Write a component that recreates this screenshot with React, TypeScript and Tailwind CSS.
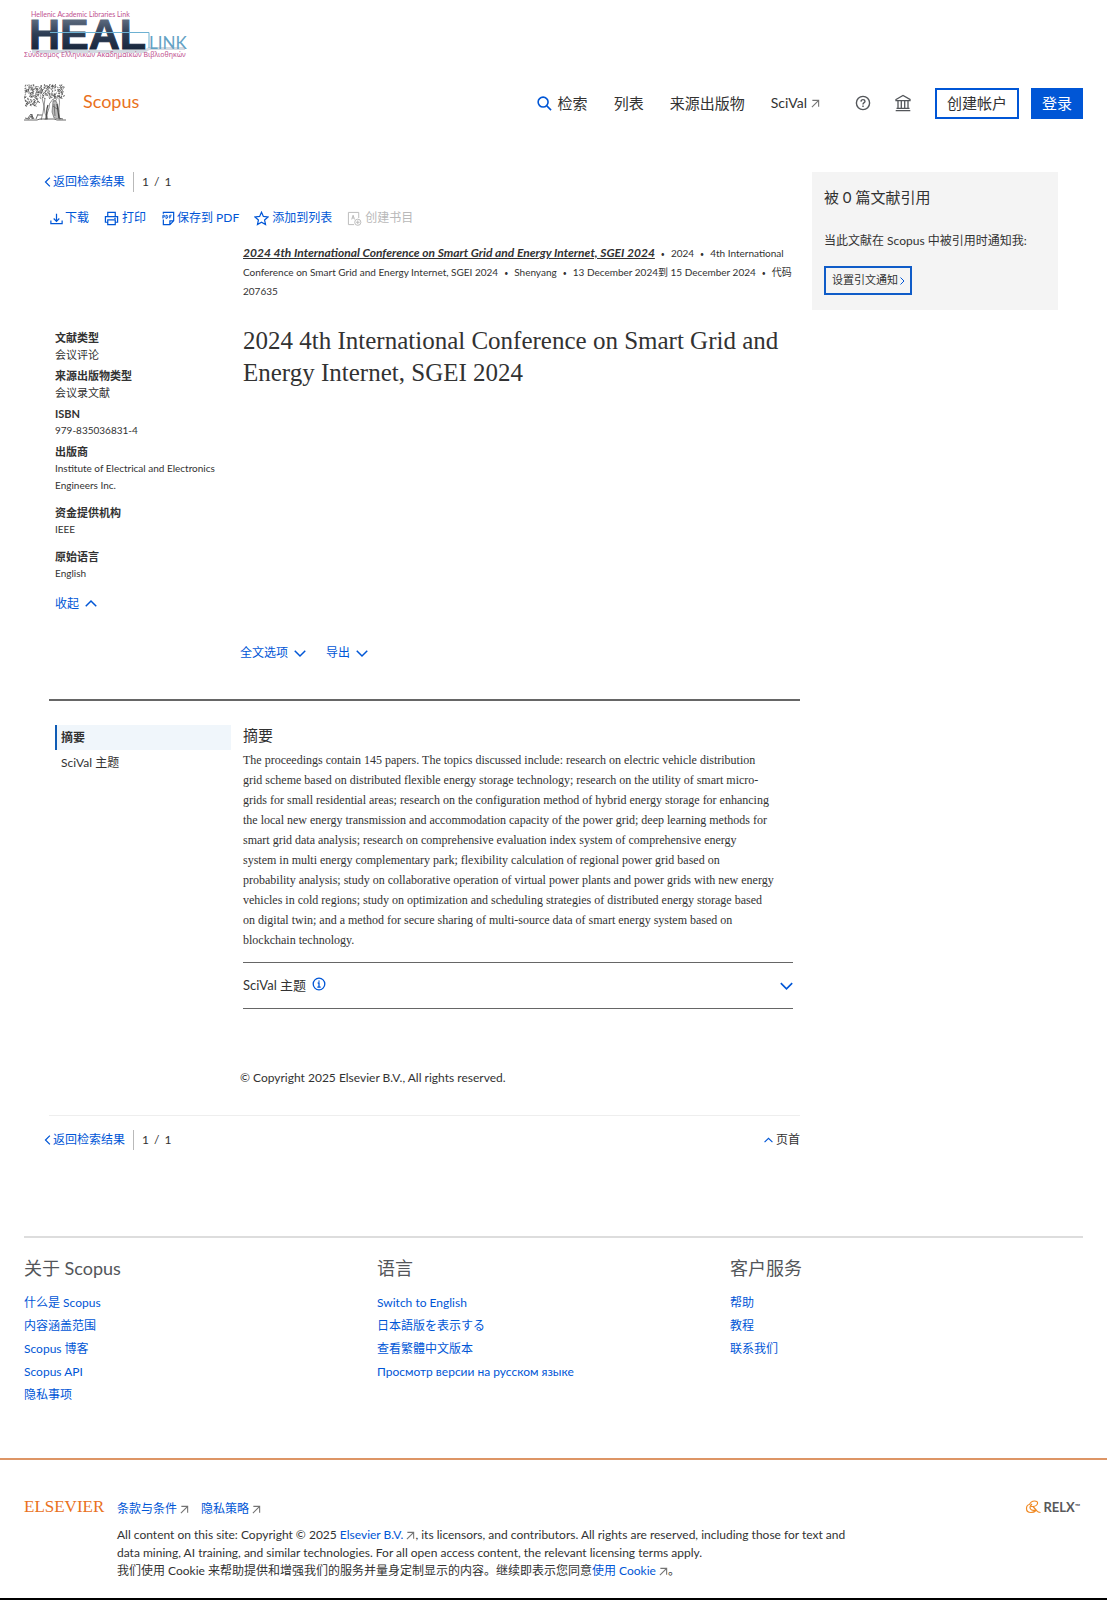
import type { ReactNode } from 'react'

const BLUE = 'text-[#0056d6]'

const ABSTRACT = [
  'The proceedings contain 145 papers. The topics discussed include: research on electric vehicle distribution',
  'grid scheme based on distributed flexible energy storage technology; research on the utility of smart micro-',
  'grids for small residential areas; research on the configuration method of hybrid energy storage for enhancing',
  'the local new energy transmission and accommodation capacity of the power grid; deep learning methods for',
  'smart grid data analysis; research on comprehensive evaluation index system of comprehensive energy',
  'system in multi energy complementary park; flexibility calculation of regional power grid based on',
  'probability analysis; study on collaborative operation of virtual power plants and power grids with new energy',
  'vehicles in cold regions; study on optimization and scheduling strategies of distributed energy storage based',
  'on digital twin; and a method for secure sharing of multi-source data of smart energy system based on',
  'blockchain technology.',
]

const DETAILS = [
  { label: '文献类型', value: '会议评论', gap: 'mb-1', size: 'text-[11px]' },
  { label: '来源出版物类型', value: '会议录文献', gap: 'mb-1', size: 'text-[11px]' },
  { label: 'ISBN', value: '979-835036831-4', gap: 'mb-1', size: 'text-[10px]' },
  { label: '出版商', value: 'Institute of Electrical and Electronics Engineers Inc.', gap: 'mb-2.5', size: 'text-[10px]' },
  { label: '资金提供机构', value: 'IEEE', gap: 'mb-2.5', size: 'text-[10px]' },
  { label: '原始语言', value: 'English', gap: 'mb-[13px]', size: 'text-[10px]' },
]

const FOOTER = [
  { title: '关于 Scopus', links: ['什么是 Scopus', '内容涵盖范围', 'Scopus 博客', 'Scopus API', '隐私事项'] },
  { title: '语言', links: ['Switch to English', '日本語版を表示する', '查看繁體中文版本', 'Просмотр версии на русском языке'] },
  { title: '客户服务', links: ['帮助', '教程', '联系我们'] },
]

const CHEVRONS = {
  up: 'M1 11 8 4l7 7',
  down: 'M1 5l7 7 7-7',
  left: 'M11 1 4 8l7 7',
  right: 'M5 1l7 7-7 7',
}

function Chevron({ dir, className }: { dir: keyof typeof CHEVRONS; className: string }) {
  return (
    <svg viewBox="0 0 16 16" className={`shrink-0 ${className}`} fill="none" stroke="#0056d6" strokeWidth="2" aria-hidden>
      <path d={CHEVRONS[dir]} />
    </svg>
  )
}

function External() {
  return (
    <svg viewBox="0 0 10 10" className="inline-block size-[9px]" fill="none" stroke="#737373" strokeWidth="1.2" aria-hidden>
      <path d="M1.5 1.5h7v7M8.5 1.5 1 9" />
    </svg>
  )
}

function HealLogo() {
  return (
    <svg viewBox="0 0 166 52" className="h-[52px] w-[166px]" role="img" aria-label="HEAL-Link">
      <defs>
        <linearGradient id="heal" x1="0" y1="0" x2="0" y2="1">
          <stop offset="0" stopColor="#7b889a" />
          <stop offset="0.5" stopColor="#2d3d54" />
          <stop offset="1" stopColor="#0e1b30" />
        </linearGradient>
      </defs>
      <path d="M8 41.500h112l5-3h36" stroke="#d3dae1" strokeWidth="3" fill="none" />
      <text x="7" y="7" fontSize="7" fontFamily="Lato, sans-serif" fill="#c0508f">
        Hellenic Academic Libraries Link
      </text>
      <text x="5" y="39" fontSize="43" fontFamily="Liberation Sans, sans-serif" fontWeight="700" fill="url(#heal)" stroke="url(#heal)" strokeWidth="1">
        HEAL
      </text>
      <path d="M26 22.500H125V38" fill="none" stroke="#6db1d2" strokeWidth="1" />
      <text x="125" y="39" fontSize="17" fontFamily="Lato, sans-serif" fill="#64a2c4">
        LINK
      </text>
      <text x="0" y="47" fontSize="7" fontFamily="Noto Sans, sans-serif" fill="#c0508f">
        Σύνδεσμος Ελληνικών Ακαδημαϊκών Βιβλιοθηκών
      </text>
    </svg>
  )
}

const scatter = (n: number) => {
  const v = Math.sin(n) * 43758.5453
  return v - Math.floor(v)
}

// small leaf strokes that fill the crown of the tree
const LEAVES = Array.from({ length: 340 }, (_, i) => {
  const low = i % 6 === 0
  const x = low ? 1 + scatter(i + 1) * 14 : 1 + scatter(i + 1) * 39
  const y = low ? 15 + scatter(i * 7 + 3) * 7 : 1 + scatter(i * 7 + 3) * 13
  const a = scatter(i * 3 + 5) * 6.28
  return `M${x.toFixed(1)} ${y.toFixed(1)}l${(Math.cos(a) * 1.4).toFixed(1)} ${(Math.sin(a) * 1.4).toFixed(1)}`
}).join('')

function TreeLogo() {
  return (
    <svg viewBox="0 0 42 38" className="h-[38px] w-[42px]" fill="none" stroke="#444" role="img" aria-label="Elsevier">
      <path d={LEAVES} strokeWidth="0.7" />
      <path
        d="M18 14l2 8-1 7-2 7M21 14l-1 8 1 7 2 7M29 15q-5 5-4 9l-4 12M35 14q1 4 0 9t1 13"
        strokeWidth="0.6"
      />
      <path d="M0 36h13l3-1h14l3 1h9M4 34l3-4 3 5M8 30v5M12 35l2-5M1 34l4 1M34 34l5 1M14 31h4M5 35l2-3 2 3" strokeWidth="0.8" />
      <path d="M29 17q3-2 4 2l2 8v8l-5-1-2-6z" fill="#bbb" strokeWidth="0.5" />
      <path d="M24 21q-2 5-1 14M33 20l2 14" strokeWidth="1.2" />
      <circle cx="31" cy="15.500" r="1.400" fill="#fff" strokeWidth="0.6" />
      <path d="M30 20l1 12M29 22l4 3" strokeWidth="0.6" />
    </svg>
  )
}

function BackNav() {
  return (
    <div className="-ml-1.5 flex items-center text-[12px] leading-5">
      <a href="#results" className={`flex items-center ${BLUE}`}>
        <Chevron dir="left" className="size-[10px]" />
        返回检索结果
      </a>
      <span className="ml-2 h-5 border-l border-[#b9b9b9] pl-2">
        1<span className="px-[5px]">/</span>1
      </span>
    </div>
  )
}

function Tool({ icon, label, disabled, gap }: { icon: ReactNode; label: string; disabled?: boolean; gap: string }) {
  return (
    <button type="button" disabled={disabled} className={`flex items-center ${gap} ${disabled ? 'text-[#b9b9b9]' : BLUE}`}>
      <svg viewBox="0 0 16 16" className="size-[15px]" fill="none" stroke="currentColor" strokeWidth="1.3" aria-hidden>
        {icon}
      </svg>
      {label}
    </button>
  )
}

function Header() {
  return (
    <header className="px-6 pt-2.5">
      <HealLogo />
      <div className="mt-[22px] flex items-center">
        <TreeLogo />
        <a href="#home" className="ml-[17px] pb-1 text-[18px] leading-6 text-[#e9711c]">
          Scopus
        </a>
        <nav className="ml-auto flex items-center text-[15px] leading-6">
          <a href="#search" className="flex items-center gap-1.5">
            <svg viewBox="0 0 16 16" className="size-[15px]" fill="none" stroke="#0056d6" strokeWidth="1.7" aria-hidden>
              <circle cx="6.500" cy="6.500" r="5.300" />
              <path d="m10.500 10.500 4.500 4.500" />
            </svg>
            检索
          </a>
          <a href="#lists" className="ml-[26px]">列表</a>
          <a href="#sources" className="ml-[26px]">来源出版物</a>
          <a href="#scival" className="ml-[26px] flex items-center gap-1 text-[14px]">
            SciVal
            <External />
          </a>
          <button type="button" aria-label="帮助" className="ml-[35px]">
            <svg viewBox="0 0 16 16" className="size-4" fill="none" stroke="#53565a" strokeWidth="1.4" aria-hidden>
              <circle cx="8" cy="8" r="6.600" />
              <path d="M6 6.600q.1-2 2-2t2 1.700q0 1-1.200 1.600Q8 8.400 8 9.600M8 10.600v1.500" />
            </svg>
          </button>
          <button type="button" aria-label="机构" className="ml-6">
            <svg viewBox="0 0 16 18" className="h-[18px] w-4" fill="none" stroke="#53565a" strokeWidth="1.300" aria-hidden>
              <path d="M1 5.500 8 1.500l7 4v1.200H1zM3 7v7M6.300 7v7M9.700 7v7M13 7v7M1.500 14.300h13M.7 16.600h14.600" />
            </svg>
          </button>
          <button type="button" className="ml-6 h-[31px] border-2 border-[#0056d6] px-[10px]">创建帐户</button>
          <button type="button" className="ml-3 h-[31px] bg-[#0056d6] px-[11px] text-white">登录</button>
        </nav>
      </div>
    </header>
  )
}

function Toolbar() {
  return (
    <div className="mt-4 flex h-5 items-center gap-[15px] text-[12px] leading-5">
      <Tool label="下载" gap="gap-px" icon={<path d="M8 3v7.500M5 8l3 3 3-3M2 10v3.500h12V10" />} />
      <Tool label="打印" gap="gap-[3px]" icon={<path d="M4 6V1.500h8V6M4 12H1.500V6h13v6H12M4 9.500h8v5H4zM11 7.800h1.500" />} />
      <Tool
        label="保存到 PDF"
        gap="gap-px"
        icon={
          <>
            <path d="M2.500 9v5.500h7l4-4v-9h-11V3M9.500 14.500v-4h4" />
            <path d="M2 8V4.500h1.500V6.500H2M5.300 8V4.500q2 0 2 1.700T5.300 8M9.300 8V4.500h2M9.300 6.200h1.500" strokeWidth="1" />
          </>
        }
      />
      <Tool label="添加到列表" gap="gap-[3px]" icon={<path d="m8 1.300 2 4.500 5 .5-3.700 3.300 1 4.900L8 12l-4.300 2.500 1-4.900L1 6.300l5-.5z" />} />
      <Tool
        label="创建书目"
        gap="gap-[3px]"
        disabled
        icon={
          <>
            <path d="M7.500 14.500h-6v-13h11v6M5 9l1.500-4.500L8 9M5.500 7.500h2" strokeWidth="1" />
            <circle cx="11.500" cy="12" r="3.300" strokeWidth="1" />
            <path d="M11.500 10v4M9.500 12h4" strokeWidth="1" />
          </>
        }
      />
    </div>
  )
}

function Dot() {
  return <span className="mx-1.5 text-[7px]">•</span>
}

function Record() {
  return (
    <>
      <BackNav />
      <Toolbar />
      <div className="grid grid-cols-[188px_minmax(0,1fr)] pt-4 pr-[7px] pl-1.5">
        <div className="col-start-2 text-[10px] leading-[18px]">
          <a href="#source" className="text-[12px] font-bold italic underline">
            2024 4th International Conference on Smart Grid and Energy Internet, SGEI 2024
          </a>
          <Dot />2024
          <Dot />4th International <br />
          Conference on Smart Grid and Energy Internet, SGEI 2024
          <Dot />Shenyang
          <Dot />13 December 2024到 15 December 2024
          <Dot />代码 <br />
          207635
        </div>
        <dl className="mt-[29px] pr-3 text-[11px] leading-[17px]">
          {DETAILS.map((d) => (
            <div key={d.label} className={d.gap}>
              <dt className="font-bold">{d.label}</dt>
              <dd className={d.size}>{d.value}</dd>
            </div>
          ))}
          <button type="button" className={`flex items-center gap-1.5 text-[12px] ${BLUE}`}>
            收起
            <Chevron dir="up" className="size-3" />
          </button>
        </dl>
        <h1 className="mt-[25px] font-['Liberation_Serif','Noto_Serif',serif] text-[25px] leading-8 text-[#323232]">
          2024 4th International Conference on Smart Grid and Energy Internet, SGEI 2024
        </h1>
        <div className="col-start-2 mt-[31px] -ml-[3px] flex gap-5 text-[12px] leading-5">
          <button type="button" className={`flex items-center gap-1.5 ${BLUE}`}>
            全文选项
            <Chevron dir="down" className="size-3" />
          </button>
          <button type="button" className={`flex items-center gap-1.5 ${BLUE}`}>
            导出
            <Chevron dir="down" className="size-3" />
          </button>
        </div>
      </div>
    </>
  )
}

function Abstract() {
  return (
    <section className="mt-9 grid grid-cols-[188px_minmax(0,1fr)] border-t-2 border-[#666] pt-6 pr-[7px] pl-1.5">
      <nav className="pr-3 text-[12px] leading-[25px]">
        <a href="#abstract" className="block border-l-2 border-[#0f5cb5] bg-[#f0f6fb] pl-1 font-bold">摘要</a>
        <a href="#topics" className="block pl-1.5">SciVal 主题</a>
      </nav>
      <div>
        <h2 className="text-[15px] leading-5">摘要</h2>
        <p className="mt-[5px] font-['Liberation_Serif',serif] text-[12px] leading-5 whitespace-nowrap">
          {ABSTRACT.map((line) => (
            <span key={line} className="block">{line}</span>
          ))}
        </p>
        <div className="mt-3 flex h-[47px] items-center border-y border-[#666] text-[13px]">
          SciVal 主题
          <svg viewBox="0 0 14 14" className="mb-1 ml-1.5 size-3.5" fill="none" stroke="#0056d6" strokeWidth="1.300" aria-hidden>
            <circle cx="7" cy="7" r="5.800" />
            <path d="M5.700 6H7v4M5.300 10.200h3.400M7 3.500v1.300" />
          </svg>
          <button type="button" aria-label="展开" className="ml-auto">
            <Chevron dir="down" className="size-[13px]" />
          </button>
        </div>
      </div>
    </section>
  )
}

function Citations() {
  return (
    <aside className="w-[246px] shrink-0 bg-[#f4f4f4] px-3 pt-[13px] pb-[15px]">
      <h2 className="text-[15px] leading-6">被 0 篇文献引用</h2>
      <p className="mt-5 text-[12px] leading-6">当此文献在 Scopus 中被引用时通知我:</p>
      <button type="button" className="mt-[13px] flex h-[29px] items-center border-2 border-[#0f5cc8] pr-1 pl-1.5 text-[11px]">
        设置引文通知
        <Chevron dir="right" className="size-2" />
      </button>
    </aside>
  )
}

function Footer() {
  return (
    <footer>
      <div className="mx-6 grid grid-cols-3 border-t-2 border-[#ddd] pt-4">
        {FOOTER.map((col) => (
          <div key={col.title}>
            <h3 className="text-[18px] leading-7 text-[#53565a]">{col.title}</h3>
            <ul className={`mt-[9px] text-[12px] leading-[23px] ${BLUE}`}>
              {col.links.map((l) => (
                <li key={l}>
                  <a href="#footer">{l}</a>
                </li>
              ))}
            </ul>
          </div>
        ))}
      </div>
      <div className="mt-[52px] flex items-start border-t-2 border-[#dd9565] px-6 pt-[37px]">
        <div className="w-[93px] shrink-0 font-['Liberation_Serif',serif] text-[17px] leading-5 text-[#e9711c]">ELSEVIER</div>
        <div className="pt-[3px] text-[12px] leading-[18px]">
          <div className="mb-2 flex gap-3">
            <a href="#terms" className={BLUE}>
              条款与条件 <External />
            </a>
            <a href="#privacy" className={BLUE}>
              隐私策略 <External />
            </a>
          </div>
          <p>
            All content on this site: Copyright © 2025 <a href="#elsevier" className={BLUE}>Elsevier B.V.</a> <External />, its
            licensors, and contributors. All rights are reserved, including those for text and <br />
            data mining, AI training, and similar technologies. For all open access content, the relevant licensing terms apply.
          </p>
          <p>
            我们使用 Cookie 来帮助提供和增强我们的服务并量身定制显示的内容。继续即表示您同意
            <a href="#cookies" className={BLUE}>使用 Cookie</a> <External />。
          </p>
        </div>
        <div className="ml-auto flex shrink-0 items-center gap-0.5 pr-[3px] text-[13px] leading-5 font-bold text-[#58595b]">
          <svg viewBox="0 0 16 14" className="h-3.5 w-4" fill="none" stroke="#f08a24" strokeWidth="1.200" aria-hidden>
            <path d="M4.500 4.500Q6 1 9.500 1q3.500 0 3 2.500T8 6.500H6M4.500 4.500Q1.500 5 1.500 8.500q0 4 4.500 4 3 0 5-2M8 6.500l3.500 4q1.500 2 4 2M7 4q-3 3-1.500 5t5 1" />
          </svg>
          <span>RELX<sup className="text-[7px]">™</sup></span>
        </div>
      </div>
    </footer>
  )
}

export default function App() {
  return (
    <div className="border-b-2 border-black bg-white pb-[18px] font-['Lato','Noto_Sans_CJK_SC',sans-serif] text-[#323232]">
      <Header />
      <div className="flex items-start gap-3 px-[49px] pt-[50px]">
        <main className="min-w-0 flex-1">
          <Record />
          <Abstract />
          <p className="mt-[59px] ml-[191px] text-[12px] leading-5">© Copyright 2025 Elsevier B.V., All rights reserved.</p>
          <div className="mt-[27px] mb-[86px] flex items-center justify-between border-t border-[#eee] pt-3.5">
            <BackNav />
            <a href="#top" className="flex items-center gap-[3px] text-[12px]">
              <Chevron dir="up" className="size-[9px]" />
              页首
            </a>
          </div>
        </main>
        <Citations />
      </div>
      <Footer />
    </div>
  )
}
